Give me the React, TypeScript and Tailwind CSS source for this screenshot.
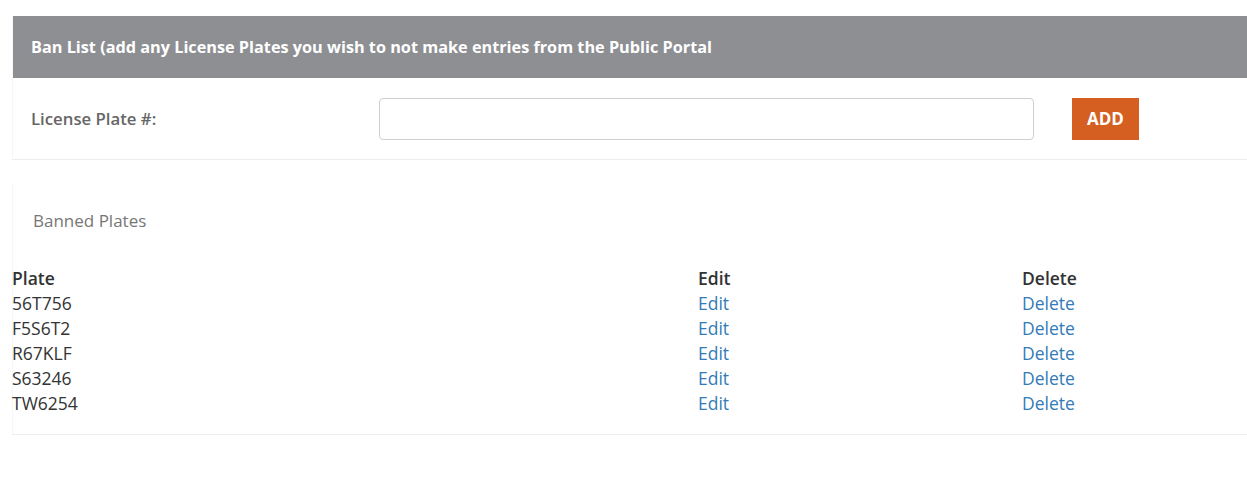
const plates = ['56T756', 'F5S6T2', 'R67KLF', 'S63246', 'TW6254'];

export default function App() {
  return (
    <div className="min-h-[487px] bg-white pl-3 pt-4 font-['Open_Sans',sans-serif] text-base">
      <section className="border-b border-l border-[#ececec] border-l-[#f6f6f6]">
        <div className="flex h-[62px] items-center bg-[#8e8f93] px-[18px]">
          <h2 className="text-[16.25px] font-bold text-white">
            Ban List (add any License Plates you wish to not make entries from the Public Portal
          </h2>
        </div>
        <form className="flex items-center pb-[19px] pt-5" onSubmit={(event) => event.preventDefault()}>
          <label className="w-[366px] pl-[18px] text-[16.75px] font-semibold text-[#666]" htmlFor="plate">
            License Plate #:
          </label>
          <input
            id="plate"
            className="h-[42px] w-[655px] rounded border border-[#cfcfcf] bg-white px-3 outline-none"
          />
          <button
            className="ml-[38px] h-[42px] w-[67px] bg-[#d55f21] text-[17px] font-bold text-white"
            type="submit"
          >
            ADD
          </button>
        </form>
      </section>

      <section className="mt-6 border-b border-l border-[#ececec] border-l-[#f6f6f6] pb-[18px] pt-[26px]">
        <p className="pl-5 text-[17px] leading-[22px] text-[#777]">Banned Plates</p>
        <table className="-ml-px mt-[34px] w-full border-collapse text-left text-[17.5px] leading-[25px] text-[#333]">
          <thead>
            <tr>
              <th className="w-[686px] p-0 font-semibold">Plate</th>
              <th className="w-[324px] p-0 font-semibold">Edit</th>
              <th className="p-0 font-semibold">Delete</th>
            </tr>
          </thead>
          <tbody>
            {plates.map((plate) => (
              <tr key={plate}>
                <td className="p-0">{plate}</td>
                <td className="p-0">
                  <a className="text-[#337ab7]" href="#">
                    Edit
                  </a>
                </td>
                <td className="p-0">
                  <a className="text-[#337ab7]" href="#">
                    Delete
                  </a>
                </td>
              </tr>
            ))}
          </tbody>
        </table>
      </section>
    </div>
  );
}
